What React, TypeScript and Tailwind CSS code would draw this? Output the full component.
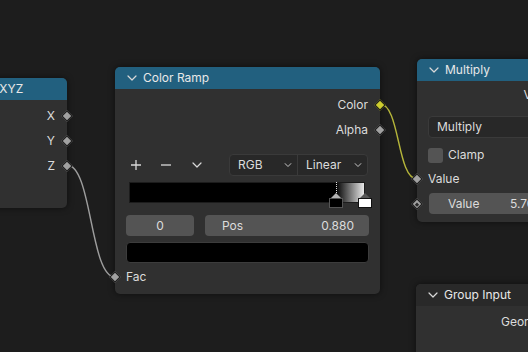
import React from "react";

const Socket = ({ color = "#a1a1a1", dot = false }: { color?: string; dot?: boolean }) => (
  <div className="absolute top-1/2 w-[8px] h-[8px] -translate-y-1/2 -translate-x-1/2 rotate-45 border border-[#1a1a1a] flex items-center justify-center" style={{ backgroundColor: color }}>
    {dot && <div className="w-[3px] h-[3px] bg-[#2a2a2a]" />}
  </div>
);

const Chevron = ({ className = "" }: { className?: string }) => (
  <svg width="10" height="6" viewBox="0 0 10 6" className={className}>
    <path d="M1 1 L5 5 L9 1" fill="none" stroke="#d8d8d8" strokeWidth="1.2" strokeLinecap="round" strokeLinejoin="round" />
  </svg>
);

const Header = ({ title, dark = false }: { title: string; dark?: boolean }) => (
  <div className={`h-[22px] flex items-center gap-[6px] pl-[12px] rounded-t-[5px] ${dark ? "bg-[#292929]" : "bg-[#22607f]"}`}>
    <Chevron />
    <span className="text-[#e8e8e8] whitespace-nowrap">{title}</span>
  </div>
);

const OutRow = ({ label, color }: { label: string; color?: string }) => (
  <div className="relative h-[22px] flex items-center justify-end pr-[12px]">
    <span>{label}</span>
    <div className="absolute right-0 top-0 h-full w-0">
      <Socket color={color} />
    </div>
  </div>
);

const App = () => {
  return (
    <div
      className="relative w-[528px] h-[352px] overflow-hidden bg-[#1d1d1d] text-[12px] text-[#dcdcdc]"
      style={{ fontFamily: "Inter, 'Noto Sans', sans-serif" }}
    >
      {/* wires */}
      <svg className="absolute inset-0" width="528" height="352">
        <path d="M67 165 C92 165 90 277 115 277" fill="none" stroke="#9d9d9d" strokeWidth="1.4" />
        <path d="M380 104 C400 104 397 179 417 179" fill="none" stroke="#b5b53a" strokeWidth="1.4" />
      </svg>

      {/* Separate XYZ */}
      <div className="absolute left-[-83px] top-[78px] w-[150px] h-[130px] bg-[#303030] rounded-[5px] shadow-[0_0_6px_rgba(0,0,0,0.55)]">
        <Header title="Separate XYZ" />
        <div className="pt-[5px] flex flex-col gap-[3px]">
          <OutRow label="X" />
          <OutRow label="Y" />
          <OutRow label="Z" />
        </div>
      </div>

      {/* Color Ramp */}
      <div className="absolute left-[115px] top-[67px] w-[265px] h-[227px] bg-[#303030] rounded-[5px] shadow-[0_0_6px_rgba(0,0,0,0.55)]">
        <Header title="Color Ramp" />
        <div className="pt-[5px] flex flex-col gap-[3px]">
          <OutRow label="Color" color="#cdcd2e" />
          <OutRow label="Alpha" />
        </div>

        <div className="mt-[13px] h-[22px] flex items-center px-[12px]">
          <div className="flex items-center gap-[18px] pl-[3px]">
            <svg width="12" height="12" viewBox="0 0 12 12">
              <path d="M6 1 V11 M1 6 H11" stroke="#d8d8d8" strokeWidth="1.3" />
            </svg>
            <svg width="12" height="12" viewBox="0 0 12 12">
              <path d="M1 6 H11" stroke="#d8d8d8" strokeWidth="1.3" />
            </svg>
            <Chevron className="ml-[2px]" />
          </div>
          <div className="ml-auto flex h-[22px] w-[139px] rounded-[4px] bg-[#282828] border border-[#3a3a3a] overflow-hidden">
            <div className="w-[68px] flex items-center justify-between pl-[8px] pr-[4px] border-r border-[#3a3a3a]">
              <span>RGB</span>
              <Chevron className="scale-75" />
            </div>
            <div className="flex-1 flex items-center justify-between pl-[8px] pr-[4px]">
              <span>Linear</span>
              <Chevron className="scale-75" />
            </div>
          </div>
        </div>

        {/* ramp */}
        <div className="relative mt-[6px] mx-[14px] h-[21px]">
          <div className="h-full w-[236px] border border-[#1c1c1c]" style={{ background: "linear-gradient(to right, #000 0%, #000 88%, #e8e8e8 100%)" }} />
          <div className="absolute left-[207px] top-0 h-[11px] border-l border-dotted border-[#ddd]" />
          <div className="absolute left-[202px] top-[11px] w-0 h-0 border-l-[5px] border-r-[5px] border-b-[5px] border-l-transparent border-r-transparent border-b-[#b4b4b4]" />
          <div className="absolute left-[200px] top-[16px] w-[14px] h-[10px] bg-[#000] border border-[#555]" />
          <div className="absolute left-[231px] top-[11px] w-0 h-0 border-l-[5px] border-r-[5px] border-b-[5px] border-l-transparent border-r-transparent border-b-[#555]" />
          <div className="absolute left-[229px] top-[16px] w-[14px] h-[10px] bg-[#fff] border border-[#111]" />
        </div>

        <div className="mt-[12px] mx-[11px] flex gap-[11px] h-[21px]">
          <div className="w-[68px] rounded-[4px] bg-[#545454] flex items-center justify-center">0</div>
          <div className="flex-1 rounded-[4px] bg-[#545454] flex items-center justify-between pl-[17px] pr-[15px]">
            <span>Pos</span>
            <span>0.880</span>
          </div>
        </div>

        <div className="mt-[6px] mx-[11px] h-[21px] rounded-[4px] bg-[#000] border border-[#3c3c3c]" />

        <div className="relative mt-[3px] h-[22px] flex items-center pl-[11px]">
          <span>Fac</span>
          <div className="absolute left-0 top-0 h-full w-0">
            <Socket />
          </div>
        </div>
      </div>

      {/* Multiply */}
      <div className="absolute left-[417px] top-[59px] w-[150px] h-[163px] bg-[#303030] rounded-[5px] shadow-[0_0_6px_rgba(0,0,0,0.55)]">
        <Header title="Multiply" />
        <div className="pt-[3px]">
          <div className="h-[22px] flex items-center justify-end pr-[12px]">Value</div>
        </div>
        <div className="mt-[10px] mx-[11px] h-[22px] rounded-[4px] bg-[#282828] border border-[#3a3a3a] flex items-center pl-[8px]">
          Multiply
        </div>
        <div className="mt-[9px] mx-[11px] h-[16px] flex items-center gap-[5px]">
          <div className="w-[15px] h-[15px] rounded-[3px] bg-[#545454]" />
          <span>Clamp</span>
        </div>
        <div className="relative mt-[5px] h-[22px] flex items-center pl-[11px]">
          <span>Value</span>
          <div className="absolute left-0 top-0 h-full w-0">
            <Socket />
          </div>
        </div>
        <div className="relative mt-[3px] h-[21px]">
          <div className="absolute left-0 top-0 h-full w-0">
            <Socket dot />
          </div>
          <div className="mx-[12px] h-full rounded-[4px] bg-[#545454] flex items-center justify-between pl-[19px] pr-[13px]">
            <span>Value</span>
            <span>5.700</span>
          </div>
        </div>
      </div>

      {/* Group Input */}
      <div className="absolute left-[416px] top-[284px] w-[153px] h-[90px] bg-[#303030] rounded-[5px] shadow-[0_0_6px_rgba(0,0,0,0.55)]">
        <Header title="Group Input" dark />
        <div className="pt-[5px]">
          <div className="h-[22px] flex items-center justify-end pr-[12px]">Geometry</div>
        </div>
      </div>
    </div>
  );
};

export default App;
